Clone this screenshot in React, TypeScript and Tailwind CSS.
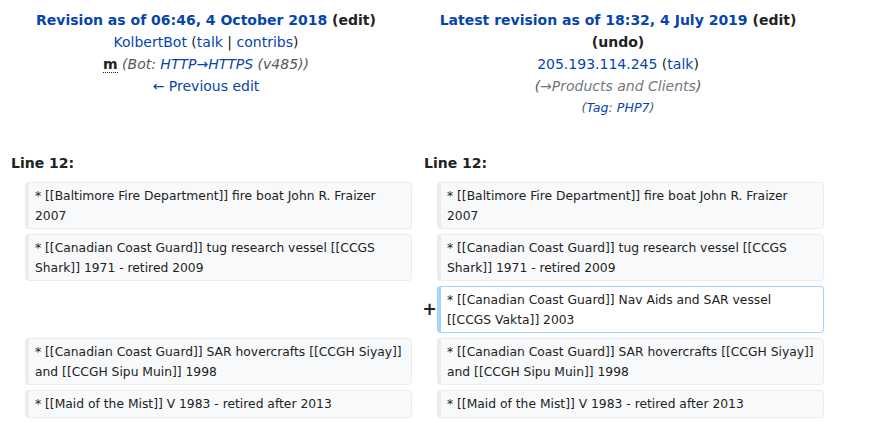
const link = "text-[#0645ad]";

function Ctx({ children }: { children: React.ReactNode }) {
  return (
    <div className="rounded-[4px] border border-[#eaecf0] border-l-4 bg-[#f8f9fa] px-[6px] pt-[4px] pb-[2px] text-[12.32px] leading-[19.5px] text-[#222]">
      {children}
    </div>
  );
}

function Added({ children }: { children: React.ReactNode }) {
  return (
    <div className="rounded-[4px] border border-[#a3d3ff] border-l-4 bg-white px-[6px] pt-[4px] pb-[2px] text-[12.32px] leading-[19.5px] text-[#222]">
      {children}
    </div>
  );
}

export default function App() {
  return (
    <div
      className="h-[423px] w-[874px] overflow-hidden bg-white text-[14px] text-[#222]"
      style={{ fontFamily: '"DejaVu Sans", sans-serif' }}
    >
      {/* revision headers */}
      <div className="grid grid-cols-[412px_412px] pt-[9px] leading-[22px]">
        <div className="text-center">
          <div className="font-bold">
            <span className={link}>Revision as of 06:46, 4 October 2018</span> (edit)
          </div>
          <div>
            <span className={link}>KolbertBot</span> (<span className={link}>talk</span> |{" "}
            <span className={link}>contribs</span>)
          </div>
          <div>
            <abbr className="font-bold no-underline border-b border-dotted border-[#222]">m</abbr>{" "}
            <span className="italic text-[#54595d]">
              (Bot: <span className={link}>HTTP→HTTPS</span> (v485))
            </span>
          </div>
          <div className={link}>← Previous edit</div>
        </div>
        <div className="text-center">
          <div className="font-bold">
            <span className={link}>Latest revision as of 18:32, 4 July 2019</span> (edit)
          </div>
          <div className="font-bold">(undo)</div>
          <div>
            <span className={link}>205.193.114.245</span> (<span className={link}>talk</span>)
          </div>
          <div className="italic text-[#54595d]">
            (<span className="text-[#72777d]">→Products and Clients</span>)
          </div>
          <div className="text-[12.6px] italic text-[#54595d]">
            (<span className={link}>Tag</span>: <span className={link}>PHP7</span>)
          </div>
        </div>
      </div>

      {/* line numbers */}
      <div className="mt-[33px] grid grid-cols-[412px_412px] font-bold leading-[22px]">
        <div className="pl-[11px]">Line 12:</div>
        <div className="pl-[12px]">Line 12:</div>
      </div>

      {/* diff rows */}
      <div className="mt-[8px] grid grid-cols-[25px_387px_25px_387px] gap-y-[5px]">
        <div />
        <Ctx>* [[Baltimore Fire Department]] fire boat John R. Fraizer 2007</Ctx>
        <div />
        <Ctx>* [[Baltimore Fire Department]] fire boat John R. Fraizer 2007</Ctx>

        <div />
        <Ctx>* [[Canadian Coast Guard]] tug research vessel [[CCGS Shark]] 1971 - retired 2009</Ctx>
        <div />
        <Ctx>* [[Canadian Coast Guard]] tug research vessel [[CCGS Shark]] 1971 - retired 2009</Ctx>

        <div />
        <div />
        <div className="flex items-center justify-end text-[17.5px] font-bold text-[#222]">+</div>
        <Added>* [[Canadian Coast Guard]] Nav Aids and SAR vessel [[CCGS Vakta]] 2003</Added>

        <div />
        <Ctx>* [[Canadian Coast Guard]] SAR hovercrafts [[CCGH Siyay]] and [[CCGH Sipu Muin]] 1998</Ctx>
        <div />
        <Ctx>* [[Canadian Coast Guard]] SAR hovercrafts [[CCGH Siyay]] and [[CCGH Sipu Muin]] 1998</Ctx>

        <div />
        <Ctx>* [[Maid of the Mist]] V 1983 - retired after 2013</Ctx>
        <div />
        <Ctx>* [[Maid of the Mist]] V 1983 - retired after 2013</Ctx>
      </div>
    </div>
  );
}
